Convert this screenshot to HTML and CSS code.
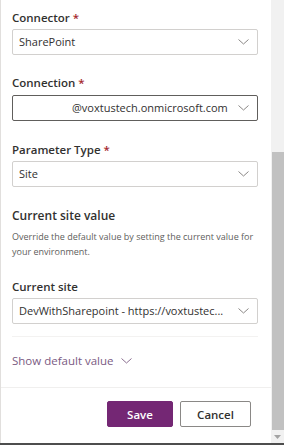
FILE: index.html
```html
<!DOCTYPE html>
<html>
<head>
<meta charset="utf-8">
<link rel="stylesheet" href="styles.css">
</head>
<body>
<div class="window">
  <div class="main">
    <div class="panel">
      <div class="form">
        <div class="label">Connector <span class="req">*</span></div>
        <div class="dropdown">
          <span class="value">SharePoint</span>
          <svg class="chev" width="11" height="6" viewBox="0 0 11 6"><polyline points="0.5,0.5 5.5,5 10.5,0.5" fill="none" stroke="#8a8886" stroke-width="1"/></svg>
        </div>

        <div class="label gap-top">Connection <span class="req">*</span></div>
        <div class="dropdown dark">
          <span class="value"><span class="mask"></span>@voxtustech.onmicrosoft.com</span>
          <svg class="chev" width="11" height="6" viewBox="0 0 11 6"><polyline points="0.5,0.5 5.5,5 10.5,0.5" fill="none" stroke="#8a8886" stroke-width="1"/></svg>
        </div>

        <div class="label gap-top2">Parameter Type <span class="req">*</span></div>
        <div class="dropdown">
          <span class="value">Site</span>
          <svg class="chev" width="11" height="6" viewBox="0 0 11 6"><polyline points="0.5,0.5 5.5,5 10.5,0.5" fill="none" stroke="#8a8886" stroke-width="1"/></svg>
        </div>

        <div class="section-title">Current site value</div>
        <p class="desc">Override the default value by setting the current value for your environment.</p>

        <div class="label gap-top3">Current site</div>
        <div class="dropdown">
          <span class="value">DevWithSharepoint - https://voxtustec...</span>
          <svg class="chev" width="11" height="6" viewBox="0 0 11 6"><polyline points="0.5,0.5 5.5,5 10.5,0.5" fill="none" stroke="#8a8886" stroke-width="1"/></svg>
        </div>

        <div class="divider"></div>

        <div class="show-default">Show default value
          <svg width="11" height="6" viewBox="0 0 11 6"><polyline points="0.5,0.5 5.5,5 10.5,0.5" fill="none" stroke="#8a6f90" stroke-width="1"/></svg>
        </div>
      </div>
      <div class="footer">
        <button class="btn primary">Save</button>
        <button class="btn secondary">Cancel</button>
      </div>
    </div>
    <div class="scrollbar">
      <div class="thumb"></div>
      <div class="arrow"><svg width="7" height="4" viewBox="0 0 7 4"><polygon points="0,0 7,0 3.5,4" fill="#a3a3a3"/></svg></div>
    </div>
  </div>
  <div class="bottom-edge"></div>
</div>
</body>
</html>
```
FILE: styles.css
```css
html, body {
  margin: 0;
  padding: 0;
  background: #ffffff;
}
body {
  font-family: "Open Sans", "Noto Sans", sans-serif;
  color: #323130;
}
.window {
  width: 284px;
  height: 445px;
  display: flex;
  flex-direction: column;
  overflow: hidden;
}
.main {
  flex: 1;
  display: flex;
  min-height: 0;
}
.panel {
  flex: 1;
  min-width: 0;
  display: flex;
  flex-direction: column;
  border-left: 1px solid #e1dfdd;
  background: #fff;
}
.form {
  flex: 1;
  min-width: 0;
  padding: 10px 13px 0 11px;
  display: flex;
  flex-direction: column;
}
.label {
  font-size: 11.5px;
  font-weight: 600;
  line-height: 16px;
  margin-bottom: 3px;
  color: #323130;
}
.req {
  color: #a4262c;
}
.gap-top { margin-top: 20px; margin-bottom: 4px; }
.gap-top2 { margin-top: 21px; }
.gap-top3 { margin-top: 20px; }
.dropdown {
  height: 26px;
  min-width: 0;
  box-sizing: border-box;
  border: 1px solid #d2d0ce;
  border-radius: 2px;
  display: flex;
  align-items: center;
  padding: 0 6px 0 6px;
  gap: 8px;
}
.dropdown.dark {
  border-color: #605e5c;
}
.value {
  flex: 1;
  min-width: 0;
  font-size: 11px;
  line-height: 16px;
  white-space: nowrap;
  overflow: hidden;
  color: #323130;
}
.mask {
  display: inline-block;
  width: 53px;
}
.chev {
  flex: none;
  margin-right: 2px;
}
.section-title {
  margin-top: 21px;
  font-size: 12px;
  font-weight: 600;
  line-height: 16px;
}
.desc {
  margin: 5px 0 0;
  font-size: 9px;
  line-height: 15px;
  color: #605e5c;
}
.divider {
  margin-top: 12px;
  height: 1px;
  background: #f3f2f1;
}
.show-default {
  margin-top: 16px;
  font-size: 11.5px;
  line-height: 16px;
  color: #7a5a82;
  display: flex;
  align-items: center;
  gap: 7px;
}
.footer {
  flex: none;
  height: 56px;
  box-sizing: border-box;
  border-top: 1px solid #f0efee;
  padding: 13px 20px 0 0;
  display: flex;
  justify-content: flex-end;
  align-items: flex-start;
  gap: 7px;
}
.btn {
  height: 26px;
  box-sizing: border-box;
  border-radius: 2px;
  font-family: "Open Sans", "Noto Sans", sans-serif;
  font-size: 11.5px;
  font-weight: 600;
  padding: 0;
  cursor: pointer;
}
.primary {
  width: 66px;
  background: #742774;
  border: 1px solid #742774;
  color: #fff;
}
.secondary {
  width: 71px;
  background: #fff;
  border: 1px solid #8a8886;
  color: #323130;
}
.scrollbar {
  flex: none;
  width: 13px;
  background: #f1f1f1;
  display: flex;
  flex-direction: column;
}
.thumb {
  margin-top: 152px;
  height: 278px;
  margin-left: 1px;
  background: #c1c1c1;
}
.arrow {
  flex: 1;
  display: flex;
  align-items: center;
  justify-content: center;
}
.bottom-edge {
  height: 2px;
  background: #4d4d4d;
}
```
